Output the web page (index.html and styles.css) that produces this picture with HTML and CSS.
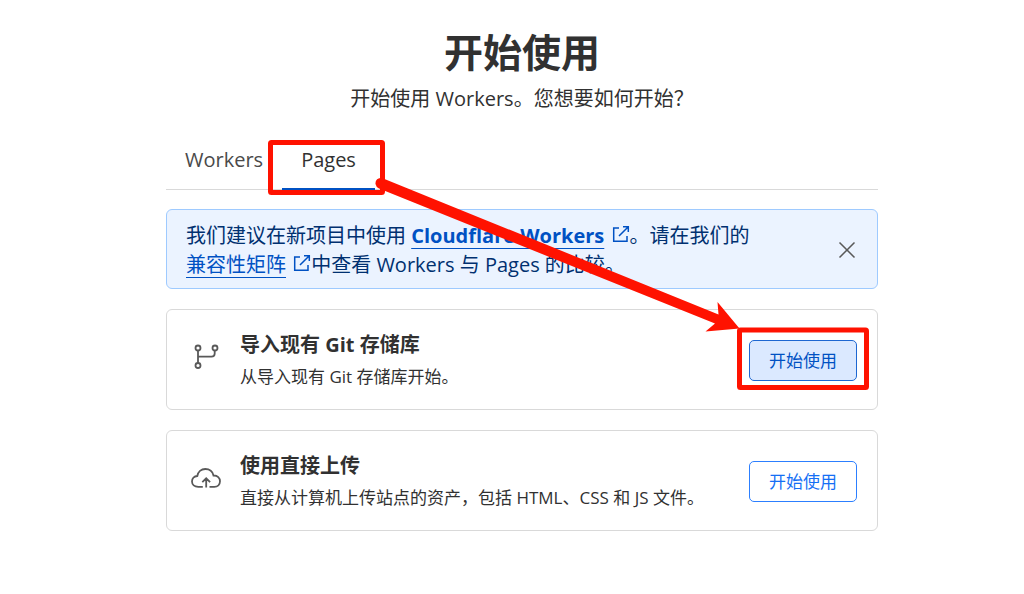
FILE: index.html
```html
<!DOCTYPE html>
<html lang="zh-CN">
<head>
<meta charset="utf-8">
<meta name="viewport" content="width=device-width, initial-scale=1">
<title>开始使用</title>
<link rel="stylesheet" href="styles.css">
</head>
<body>
<main class="page">
  <header class="intro">
    <h1 class="title">开始使用</h1>
    <p class="subtitle">开始使用 Workers。您想要如何开始？</p>
  </header>

  <nav class="tabs">
    <a class="tab" href="#workers">Workers</a>
    <a class="tab tab-active" href="#pages" aria-current="page">Pages</a>
  </nav>

  <section class="banner">
    <p class="banner-text">我们建议在新项目中使用 <a class="ext" href="#cf"><strong class="ext-label">Cloudflare Workers</strong> <svg class="ext-icon" viewBox="0 0 18 18" aria-hidden="true"><path d="M7 3H1.700V16.300H15V11M11 1.700H16.300V7M16.300 1.700L7 11"/></svg></a>。请在我们的<br><a class="ext" href="#matrix"><span class="ext-label">兼容性矩阵</span> <svg class="ext-icon" viewBox="0 0 18 18" aria-hidden="true"><path d="M7 3H1.700V16.300H15V11M11 1.700H16.300V7M16.300 1.700L7 11"/></svg></a>中查看 Workers 与 Pages 的比较。</p>
    <button class="close" type="button" aria-label="关闭"><svg class="close-icon" viewBox="0 0 18 18" aria-hidden="true"><path d="M1.500 1.500L16.500 16.500M16.500 1.500L1.500 16.500"/></svg></button>
  </section>

  <section class="card">
    <svg class="card-icon" viewBox="0 0 32 32" aria-hidden="true"><circle cx="8" cy="7" r="2.500"/><circle cx="8" cy="24.500" r="2.500"/><circle cx="25" cy="7" r="2.500"/><path d="M8 9.500V22M8 15.700H21.500Q24.700 15.700 24.700 12.500V9.500"/></svg>
    <div class="card-body">
      <h2 class="card-title">导入现有 Git 存储库</h2>
      <p class="card-text">从导入现有 Git 存储库开始。</p>
    </div>
    <button class="action action-hover" type="button">开始使用</button>
  </section>

  <section class="card">
    <svg class="card-icon" viewBox="0 0 32 32" aria-hidden="true"><path d="M12.800 24.800H8.200C4.500 24.800 2 22.400 2 19.500C2 16.500 4.200 14.200 7.300 14C8 9.800 11.200 7 15.300 7C19.600 7 22.800 9.700 23.500 13.500C27.500 13.300 30 16 30 19.200C30 22.500 27.600 24.800 24.300 24.800H19.500M16.200 25.500V16.500M12.300 20.200L16.200 16.300L20.100 20.200"/></svg>
    <div class="card-body">
      <h2 class="card-title">使用直接上传</h2>
      <p class="card-text">直接从计算机上传站点的资产，包括 HTML、CSS 和 JS 文件。</p>
    </div>
    <button class="action" type="button">开始使用</button>
  </section>

  <svg class="marks" viewBox="0 0 712 531" aria-hidden="true">
    <rect class="mark-box" x="104.500" y="142.500" width="112" height="50" rx="1"/>
    <rect class="mark-box" x="573.500" y="330" width="127" height="57.500" rx="1"/>
    <path class="mark-arrow" d="M216 178Q209 178 209.500 184Q210 187 213 188.500L549 323.500L539.500 331.500L573.500 328.500L551.500 302L552.500 314.500Z"/>
  </svg>
</main>
</body>
</html>
```

FILE: styles.css
```css
* {
  box-sizing: border-box;
}

body {
  margin: 0;
  padding: 0 0 0 20px;
  background: #fff;
  color: #313131;
  font-family: "Open Sans", "Noto Sans CJK SC", sans-serif;
  font-size: 20px;
}

h1, h2, p {
  margin: 0;
}

button {
  font: inherit;
  cursor: pointer;
}

.page {
  position: relative;
  max-width: 712px;
  margin: 0 auto;
  padding: 28px 0 24px;
}

.intro {
  text-align: center;
}

.title {
  font-size: 39px;
  line-height: 48px;
  font-weight: 700;
}

.subtitle {
  margin-top: 9px;
  line-height: 28px;
}

.tabs {
  display: flex;
  margin-top: 27px;
  border-bottom: 1px solid #d9d9d9;
}

.tab {
  margin-bottom: -1px;
  padding: 6px 19px 14px;
  border-bottom: 2px solid transparent;
  color: #4a4a4a;
  line-height: 28px;
  text-decoration: none;
}

.tab-active {
  border-color: #0051c3;
  color: #313131;
}

.banner {
  display: flex;
  align-items: center;
  justify-content: space-between;
  margin-top: 19px;
  padding: 11px 21px 9px 19px;
  border: 1px solid #9ecaff;
  border-radius: 6px;
  background: #ebf3ff;
  color: #003070;
}

.banner-text {
  line-height: 29px;
}

.ext {
  color: #0051c3;
  text-decoration: none;
  white-space: nowrap;
}

.ext-label {
  text-decoration: underline;
  text-decoration-thickness: 1px;
  text-decoration-skip-ink: none;
  text-underline-offset: 5px;
}

.ext-icon {
  width: 18px;
  height: 18px;
  margin-left: 2px;
  fill: none;
  stroke: currentColor;
  stroke-width: 1.5;
}

.close {
  display: flex;
  padding: 0;
  border: 0;
  background: none;
  color: #595959;
}

.close-icon {
  width: 18px;
  height: 18px;
  fill: none;
  stroke: currentColor;
  stroke-width: 1.5;
}

.card {
  display: flex;
  align-items: center;
  margin-top: 20px;
  padding: 19px 20px 17px 23px;
  border: 1px solid #d9d9d9;
  border-radius: 6px;
}

.card-icon {
  flex: none;
  width: 32px;
  height: 32px;
  margin: 0 18px 8px 0;
  fill: none;
  stroke: #595959;
  stroke-width: 1.8;
}

.card-body {
  flex: 1;
}

.card-title {
  font-size: 20px;
  line-height: 32px;
}

.card-text {
  font-size: 17px;
  line-height: 31px;
}

.action {
  padding: 7px 19px;
  border: 1px solid #2c7fff;
  border-radius: 5px;
  background: #fff;
  color: #156ff5;
  font-size: 17px;
  line-height: 25px;
}

.action-hover {
  border-color: #1d67d2;
  background: #dbe9ff;
  color: #0051c3;
}

.marks {
  position: absolute;
  top: 0;
  left: 0;
  width: 712px;
  height: 531px;
  pointer-events: none;
}

.mark-box {
  fill: none;
  stroke: #ff1200;
  stroke-width: 5;
}

.mark-arrow {
  fill: #ff1200;
}
```
